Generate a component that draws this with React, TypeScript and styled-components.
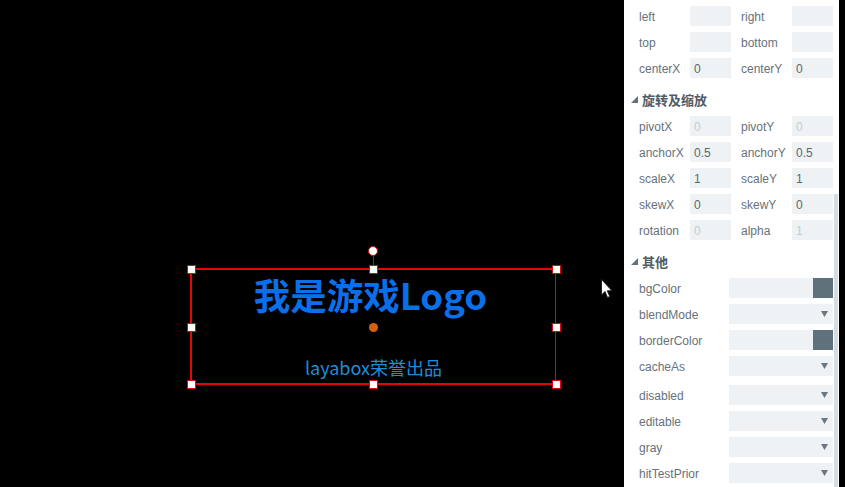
import React from "react";
import styled, { createGlobalStyle } from "styled-components";

const Global = createGlobalStyle`
  html, body { margin: 0; padding: 0; background: #000; }
  body { width: 845px; height: 487px; overflow: hidden; }
`;

const Page = styled.div`
  display: flex;
  width: 845px;
  height: 487px;
  background: #000;
  overflow: hidden;
`;

const Canvas = styled.div`
  position: relative;
  flex: 0 0 624px;
  height: 487px;
  background: #000;
`;

const Selection = styled.div`
  position: absolute;
  left: 190px;
  top: 268px;
  width: 363px;
  height: 113px;
  border: 2px solid #e0080a;
  border-right: 1px solid #c01010;
  display: flex;
  flex-direction: column;
  align-items: center;
`;

const Title = styled.div`
  margin-top: 0px;
  margin-right: 6px;
  font-family: "Noto Sans CJK SC", "Noto Sans", sans-serif;
  font-weight: 700;
  font-size: 36.5px;
  line-height: 50px;
  color: #0b6fe9;
`;

const Subtitle = styled.div`
  margin-top: 35px;
  font-family: "Noto Sans CJK SC", "Noto Sans", sans-serif;
  font-size: 18px;
  line-height: 24px;
  color: #1d8fd9;
`;

const Handle = styled.div<{ $x: number; $y: number }>`
  position: absolute;
  left: ${(p) => p.$x - 4}px;
  top: ${(p) => p.$y - 4}px;
  width: 7px;
  height: 7px;
  background: #fff;
  border: 1px solid #d8080a;
`;

const RotKnob = styled.div`
  position: absolute;
  left: 368px;
  top: 246px;
  width: 8px;
  height: 8px;
  border-radius: 50%;
  background: #fff;
  border: 1px solid #d8080a;
`;

const RotLine = styled.div`
  position: absolute;
  left: 373px;
  top: 256px;
  width: 1px;
  height: 13px;
  background: #d8080a;
`;

const Pivot = styled.div`
  position: absolute;
  left: 369px;
  top: 323px;
  width: 9px;
  height: 9px;
  border-radius: 50%;
  background: #d2620e;
`;

const Cursor = styled.svg`
  position: absolute;
  left: 601px;
  top: 279px;
`;

const Panel = styled.div`
  position: relative;
  flex: 0 0 215px;
  height: 487px;
  background: #fff;
  padding: 3px 0 0 15px;
  box-sizing: border-box;
  font-family: "Liberation Sans", Arial, sans-serif;
  font-size: 12px;
  color: #66727c;
`;

const Scrollbar = styled.div`
  position: absolute;
  right: 1px;
  top: 194px;
  width: 4px;
  bottom: 0;
  background: #d6dce1;
`;

const PairRow = styled.div`
  display: grid;
  grid-template-columns: 51px 41px 61px 41px;
  align-items: center;
  height: 26px;
  & > :nth-child(3) {
    margin-left: 10px;
  }
`;

const FullRow = styled.div<{ $gap?: number }>`
  display: grid;
  grid-template-columns: 90px 104px;
  align-items: center;
  height: 26px;
  margin-top: ${(p) => p.$gap || 0}px;
`;

const Label = styled.span`
  white-space: nowrap;
  padding-top: 2px;
`;

const Field = styled.div<{ $dim?: boolean }>`
  height: 20px;
  background: #eef2f5;
  box-sizing: border-box;
  color: ${(p) => (p.$dim ? "#c4ccd1" : "#5c6870")};
  position: relative;
  display: flex;
  align-items: center;
  justify-content: flex-end;
`;

const Swatch = styled.div`
  width: 20px;
  height: 20px;
  background: #5f717b;
`;

const Arrow = styled.svg`
  display: block;
  margin-right: 5px;
`;

const FieldText = styled.span`
  position: absolute;
  left: 4px;
  top: 4px;
`;

const Header = styled.div`
  display: flex;
  align-items: center;
  gap: 4px;
  height: 32px;
  padding-top: 4px;
  box-sizing: border-box;
  margin-left: -8px;
  font-family: "Noto Sans CJK SC", "Liberation Sans", sans-serif;
  font-weight: 700;
  font-size: 13px;
  color: #505c66;
`;

const Tri = styled.svg`
  display: block;
  margin-top: 1px;
`;

type Pair = [string, string, boolean, string, string, boolean];

const Val: React.FC<{ v: string; dim?: boolean }> = ({ v, dim }) => (
  <Field $dim={dim}>{v && <FieldText>{v}</FieldText>}</Field>
);

const PairLine: React.FC<{ p: Pair }> = ({ p }) => (
  <PairRow>
    <Label>{p[0]}</Label>
    <Val v={p[1]} dim={p[2]} />
    <Label>{p[3]}</Label>
    <Val v={p[4]} dim={p[5]} />
  </PairRow>
);

const SectionHeader: React.FC<{ title: string }> = ({ title }) => (
  <Header>
    <Tri width="7" height="7" viewBox="0 0 7 7">
      <polygon points="7,0 7,7 0,7" fill="#66727b" />
    </Tri>
    {title}
  </Header>
);

const top: Pair[] = [
  ["left", "", false, "right", "", false],
  ["top", "", false, "bottom", "", false],
  ["centerX", "0", false, "centerY", "0", false],
];

const transform: Pair[] = [
  ["pivotX", "0", true, "pivotY", "0", true],
  ["anchorX", "0.5", false, "anchorY", "0.5", false],
  ["scaleX", "1", false, "scaleY", "1", false],
  ["skewX", "0", false, "skewY", "0", false],
  ["rotation", "0", true, "alpha", "1", true],
];

const others: { name: string; kind: "color" | "select"; gap?: number }[] = [
  { name: "bgColor", kind: "color" },
  { name: "blendMode", kind: "select" },
  { name: "borderColor", kind: "color" },
  { name: "cacheAs", kind: "select" },
  { name: "disabled", kind: "select", gap: 3 },
  { name: "editable", kind: "select" },
  { name: "gray", kind: "select" },
  { name: "hitTestPrior", kind: "select" },
];

const handles: [number, number][] = [
  [191, 269], [373, 269], [556, 269],
  [191, 327], [556, 327],
  [191, 384], [373, 384], [556, 384],
];

export default function App() {
  return (
    <Page>
      <Global />
      <Canvas>
        <Selection>
          <Title>我是游戏Logo</Title>
          <Subtitle>layabox荣誉出品</Subtitle>
        </Selection>
        <RotLine />
        <RotKnob />
        {handles.map(([x, y], i) => (
          <Handle key={i} $x={x} $y={y} />
        ))}
        <Pivot />
        <Cursor width="13" height="20" viewBox="0 0 13 20">
          <path d="M0.5 0.5 L0.5 16 L4 12.5 L6.5 18.5 L8.8 17.5 L6.3 11.8 L11 11.8 Z" fill="#fff" stroke="#222" strokeWidth="1" />
        </Cursor>
      </Canvas>
      <Panel>
        {top.map((p, i) => (
          <PairLine key={i} p={p} />
        ))}
        <SectionHeader title="旋转及缩放" />
        {transform.map((p, i) => (
          <PairLine key={i} p={p} />
        ))}
        <SectionHeader title="其他" />
        {others.map((o) => (
          <FullRow key={o.name} $gap={o.gap}>
            <Label>{o.name}</Label>
            <Field>
              {o.kind === "color" ? (
                <Swatch />
              ) : (
                <Arrow width="7" height="6" viewBox="0 0 7 6">
                  <polygon points="0,0 7,0 3.5,6" fill="#6a7680" />
                </Arrow>
              )}
            </Field>
          </FullRow>
        ))}
        <Scrollbar />
      </Panel>
    </Page>
  );
}
